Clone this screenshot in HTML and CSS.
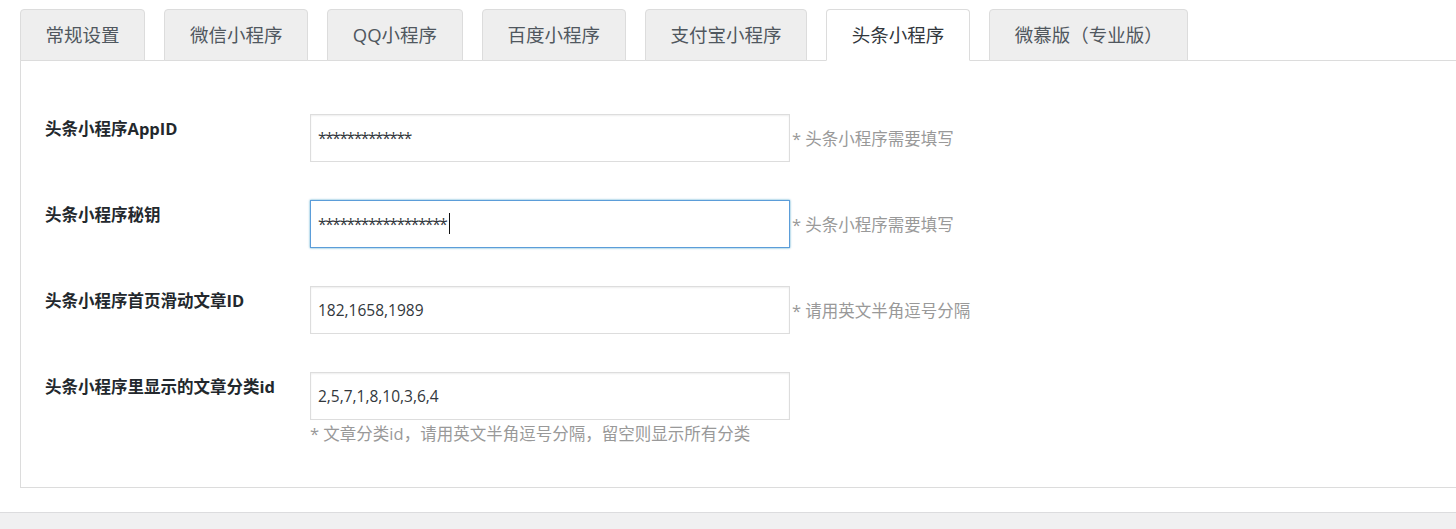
FILE: index.html
```html
<!DOCTYPE html>
<html lang="zh-CN">
<head>
  <meta charset="UTF-8" />
  <title>小程序设置</title>
  <link rel="stylesheet" href="styles.css">
</head>
<body>
  <div class="wrap">
    <div class="tabs">
      <a class="tab">常规设置</a>
      <a class="tab">微信小程序</a>
      <a class="tab">QQ小程序</a>
      <a class="tab">百度小程序</a>
      <a class="tab">支付宝小程序</a>
      <a class="tab active">头条小程序</a>
      <a class="tab">微慕版（专业版）</a>
    </div>

    <div class="panel">
      <table class="form-table">
        <tr>
          <th>头条小程序AppID</th>
          <td><input type="text" class="field secret" value="*************"><span class="hint">* 头条小程序需要填写</span></td>
        </tr>
        <tr>
          <th>头条小程序秘钥</th>
          <td><span class="field-wrap"><input type="text" class="field secret focused" value="******************"><span class="caret"></span></span><span class="hint">* 头条小程序需要填写</span></td>
        </tr>
        <tr>
          <th>头条小程序首页滑动文章ID</th>
          <td><input type="text" class="field" value="182,1658,1989"><span class="hint">* 请用英文半角逗号分隔</span></td>
        </tr>
        <tr>
          <th>头条小程序里显示的文章分类id</th>
          <td>
            <input type="text" class="field" value="2,5,7,1,8,10,3,6,4">
            <p class="desc">* 文章分类id，请用英文半角逗号分隔，留空则显示所有分类</p>
          </td>
        </tr>
      </table>
    </div>
  </div>
  <div class="footer"></div>
</body>
</html>
```

FILE: styles.css
```css
body {
  margin: 0;
  overflow: hidden;
  background: #fff;
  font-family: "Open Sans", "Noto Sans CJK SC", sans-serif;
  color: #23282d;
}
.wrap {
  padding: 9px 0 0 20px;
}
.tabs {
  display: flex;
  gap: 19.4px;
  position: relative;
  z-index: 1;
}
.tab {
  display: block;
  height: 50px;
  padding: 0 24.5px;
  margin-bottom: -1px;
  border: 1px solid #dcdcdc;
  border-radius: 4px 4px 0 0;
  background: #eee;
  color: #50575e;
  font-size: 18.5px;
  line-height: 50px;
  cursor: pointer;
}
.tab.active {
  background: #fff;
  border-bottom-color: #fff;
  color: #32373c;
}
.panel {
  width: 1460px;
  box-sizing: border-box;
  padding: 34px 0 23px 24px;
  border: 1px solid #dcdcdc;
  background: #fff;
}
.form-table {
  border-collapse: collapse;
}
.form-table th {
  width: 265px;
  padding: 22px 0 0 0;
  vertical-align: top;
  text-align: left;
  font-size: 16.5px;
  font-weight: bold;
  line-height: 23px;
}
.form-table td {
  padding: 19px 0;
  vertical-align: top;
  font-size: 16.5px;
  line-height: 23px;
}
.field {
  width: 480px;
  height: 48px;
  box-sizing: border-box;
  padding: 0 7px;
  border: 1px solid #ddd;
  box-shadow: inset 0 1px 2px rgba(0, 0, 0, 0.07);
  font-family: "Open Sans", sans-serif;
  font-size: 15.5px;
  color: #32373c;
  vertical-align: middle;
  outline: none;
}
.field.secret {
  letter-spacing: -1.4px;
}
.field.focused {
  border-color: #5b9dd9;
  box-shadow: 0 0 2px rgba(30, 140, 190, 0.8);
}
.field-wrap {
  position: relative;
  display: inline-block;
  vertical-align: middle;
}
.caret {
  position: absolute;
  left: 139px;
  top: 13px;
  width: 1px;
  height: 21px;
  background: #111;
}
.hint {
  margin-left: 2px;
  color: #999;
  vertical-align: middle;
}
.desc {
  margin: 2px 0 0;
  color: #999;
}
.footer {
  margin-top: 24px;
  height: 40px;
  border-top: 1px solid #dcdcde;
  background: #f0f0f1;
}
```
